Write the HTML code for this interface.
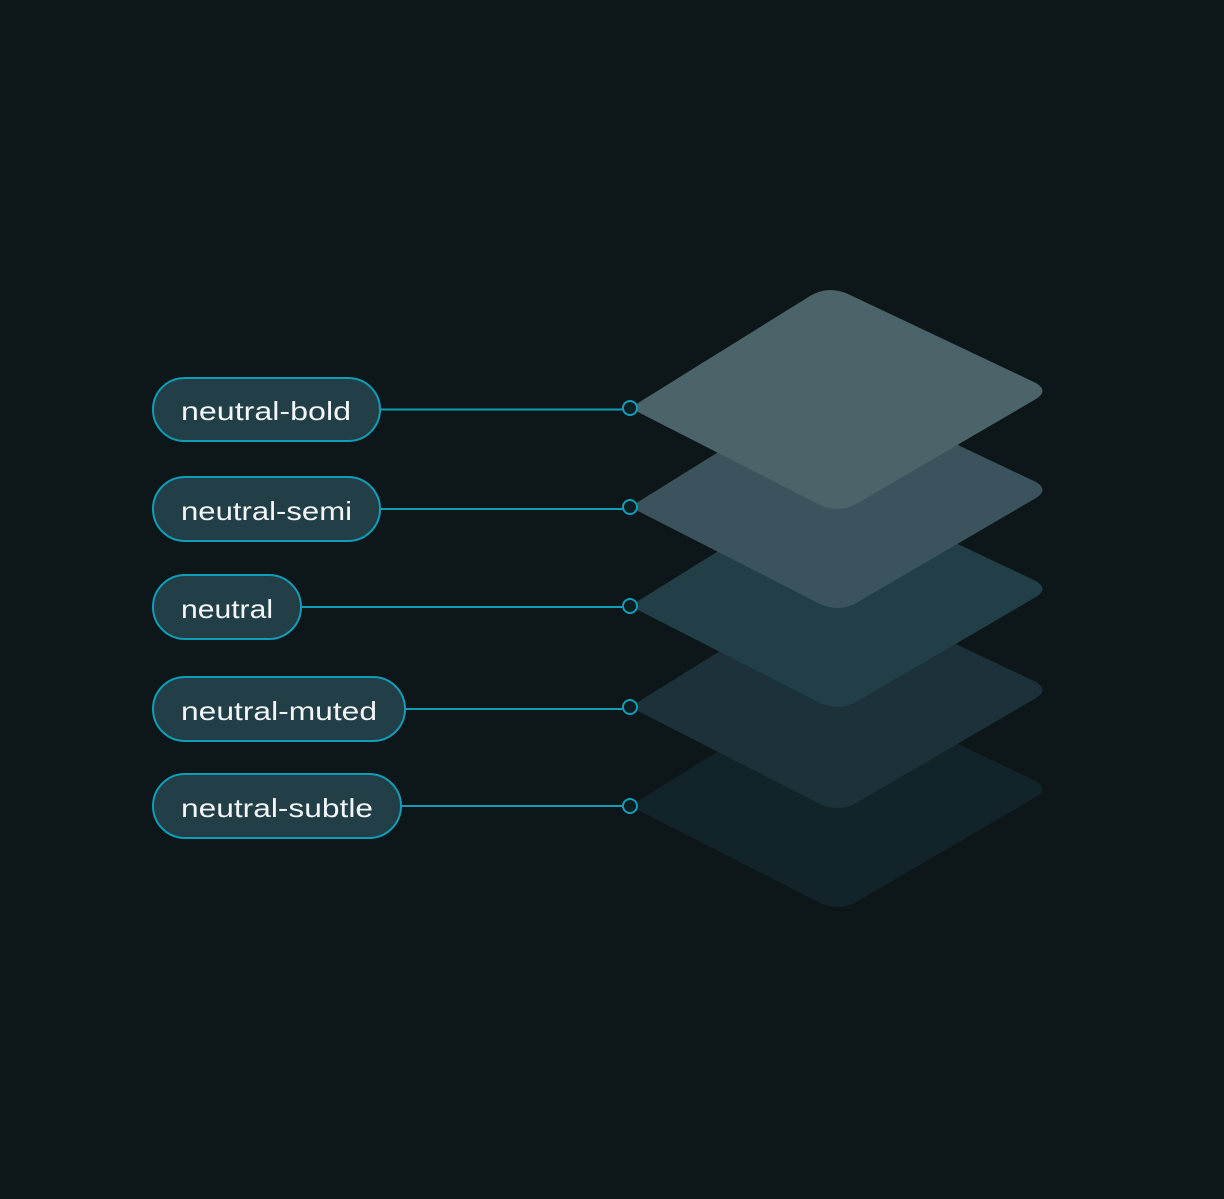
<!DOCTYPE html>
<html><head><meta charset="utf-8"><style>
html,body{margin:0;padding:0;background:#0d1719;}
svg{display:block}
text{font-family:"Liberation Sans",sans-serif;font-size:26px;fill:#f2f6f7;}
</style></head><body>
<svg width="1224" height="1199" viewBox="0 0 1224 1199" xmlns="http://www.w3.org/2000/svg">
<rect width="1224" height="1199" fill="#0d1719"/>
<defs>
<path id="d" d="M630,408 L810,296 Q828,285 848,294 L1036,383 Q1049,391 1036,399 L858,503 Q840,514 820,505 Z"/>
</defs>
<use href="#d" y="398" fill="#13232a"/>
<use href="#d" y="299" fill="#1c313a"/>
<use href="#d" y="198" fill="#223e47"/>
<use href="#d" y="99" fill="#3b535c"/>
<use href="#d" y="0" fill="#4b646a"/>
<g stroke="#0f9db8" stroke-width="2" fill="#223f48">
<rect x="153" y="378" width="227" height="63" rx="31.5"/>
<rect x="153" y="477" width="227" height="64" rx="32"/>
<rect x="153" y="575" width="148" height="64" rx="32"/>
<rect x="153" y="677" width="252" height="64" rx="32"/>
<rect x="153" y="774" width="248" height="64" rx="32"/>
<line x1="380" y1="409.5" x2="624" y2="409.5"/>
<line x1="380" y1="509" x2="624" y2="509"/>
<line x1="301" y1="607" x2="624" y2="607"/>
<line x1="405" y1="709" x2="624" y2="709"/>
<line x1="401" y1="806" x2="624" y2="806"/>
<g fill="#0d1f24">
<circle cx="630" cy="408" r="7"/>
<circle cx="630" cy="507" r="7"/>
<circle cx="630" cy="606" r="7"/>
<circle cx="630" cy="707" r="7"/>
<circle cx="630" cy="806" r="7"/>
</g>
</g>
<text x="181" y="420" textLength="170" lengthAdjust="spacingAndGlyphs">neutral-bold</text>
<text x="181" y="520" textLength="171" lengthAdjust="spacingAndGlyphs">neutral-semi</text>
<text x="181" y="618" textLength="92" lengthAdjust="spacingAndGlyphs">neutral</text>
<text x="181" y="720" textLength="196" lengthAdjust="spacingAndGlyphs">neutral-muted</text>
<text x="181" y="817" textLength="192" lengthAdjust="spacingAndGlyphs">neutral-subtle</text>
</svg>
</body></html>
